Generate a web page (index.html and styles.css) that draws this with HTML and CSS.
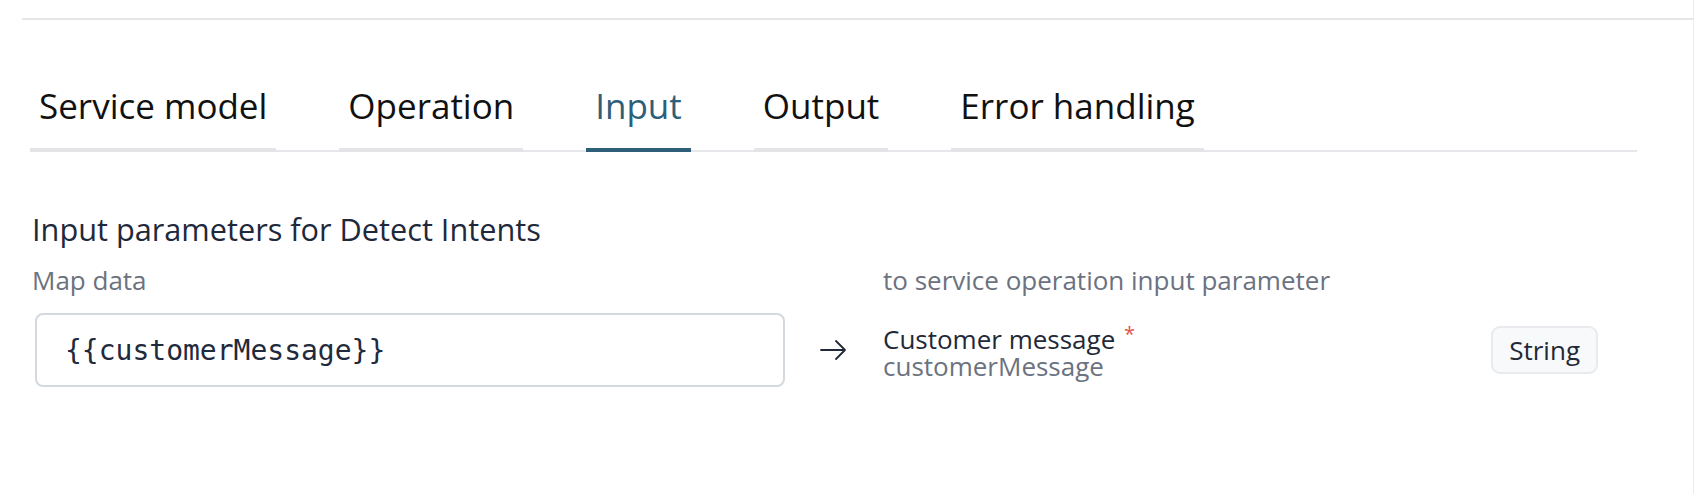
FILE: index.html
```html
<!DOCTYPE html>
<html lang="en">
<head>
<meta charset="utf-8">
<title>Input mapping</title>
<link rel="stylesheet" href="styles.css">
</head>
<body>
<div class="page">
  <div class="topbar"></div>
  <nav class="tabs">
    <div class="tab">Service model</div>
    <div class="tab">Operation</div>
    <div class="tab active">Input</div>
    <div class="tab">Output</div>
    <div class="tab">Error handling</div>
  </nav>
  <section class="mapping">
    <h2 class="heading">Input parameters for Detect Intents</h2>
    <div class="grid">
      <div class="label">Map data</div>
      <div></div>
      <div class="label">to service operation input parameter</div>

      <div class="field">{{customerMessage}}</div>
      <div class="arrow">
        <svg width="28" height="22" viewBox="0 0 28 22" fill="none" stroke="#1f2937" stroke-width="1.8" stroke-linecap="round" stroke-linejoin="round"><path d="M2 11H26M17 2L26 11L17 20"/></svg>
      </div>
      <div class="param">
        <div class="param-text">
          <div class="param-name">Customer message <span class="req">*</span></div>
          <div class="param-key">customerMessage</div>
        </div>
        <span class="badge">String</span>
      </div>
    </div>
  </section>
</div>
</body>
</html>
```

FILE: styles.css
```css
html, body {
  margin: 0;
  padding: 0;
  background: #ffffff;
}

body {
  font-family: "Open Sans", "Noto Sans", sans-serif;
  color: #1f2937;
}

.page {
  min-height: 494px;
  border-right: 1px solid #ededed;
  box-sizing: border-box;
}

.topbar {
  height: 18px;
  margin-left: 22px;
  border-bottom: 2px solid #e6e6e6;
}

.tabs {
  display: flex;
  gap: 63px;
  margin: 62px 0 0 30px;
  width: 1607px;
  border-bottom: 2px solid #e5e7eb;
}

.tab {
  font-size: 35px;
  line-height: 48px;
  color: #111111;
  padding: 0 9px 18px;
  border-bottom: 4px solid #e4e4e7;
  margin-bottom: -2px;
}

.tab.active {
  color: #2d6078;
  border-bottom-color: #2d6078;
}

.mapping {
  padding: 57px 7px 0 32px;
  width: 1605px;
  box-sizing: border-box;
}

.heading {
  margin: 0;
  font-size: 30.7px;
  font-weight: 400;
  line-height: 40px;
  color: #1e293b;
}

.grid {
  display: grid;
  grid-template-columns: 753px 98px 1fr;
  row-gap: 16px;
  margin-top: 14px;
  align-items: center;
}

.label {
  font-size: 26px;
  line-height: 34px;
  color: #6b7280;
}

.field {
  margin-left: 3px;
  height: 74px;
  box-sizing: border-box;
  border: 2px solid #d3d9de;
  border-radius: 8px;
  padding: 0 28px;
  display: flex;
  align-items: center;
  font-family: "DejaVu Sans Mono", "Liberation Mono", monospace;
  font-size: 28px;
  color: #1f2a3c;
}

.arrow {
  display: flex;
  justify-content: center;
  align-items: center;
  padding-right: 2px;
}

.param {
  display: flex;
  align-items: center;
  justify-content: space-between;
}

.param-text {
  display: flex;
  flex-direction: column;
}

.param-name {
  font-size: 26px;
  line-height: 32px;
  height: 32px;
  color: #1f2937;
}

.req {
  color: #e5534b;
  font-size: 20px;
  vertical-align: 8px;
  margin-left: 2px;
}

.param-key {
  font-size: 26px;
  line-height: 32px;
  color: #6b7280;
}

.badge {
  font-size: 26px;
  line-height: 44px;
  padding: 0 16px;
  border: 2px solid #e8eaed;
  border-radius: 9px;
  background: #f8f9fa;
  color: #1f2937;
}
```
